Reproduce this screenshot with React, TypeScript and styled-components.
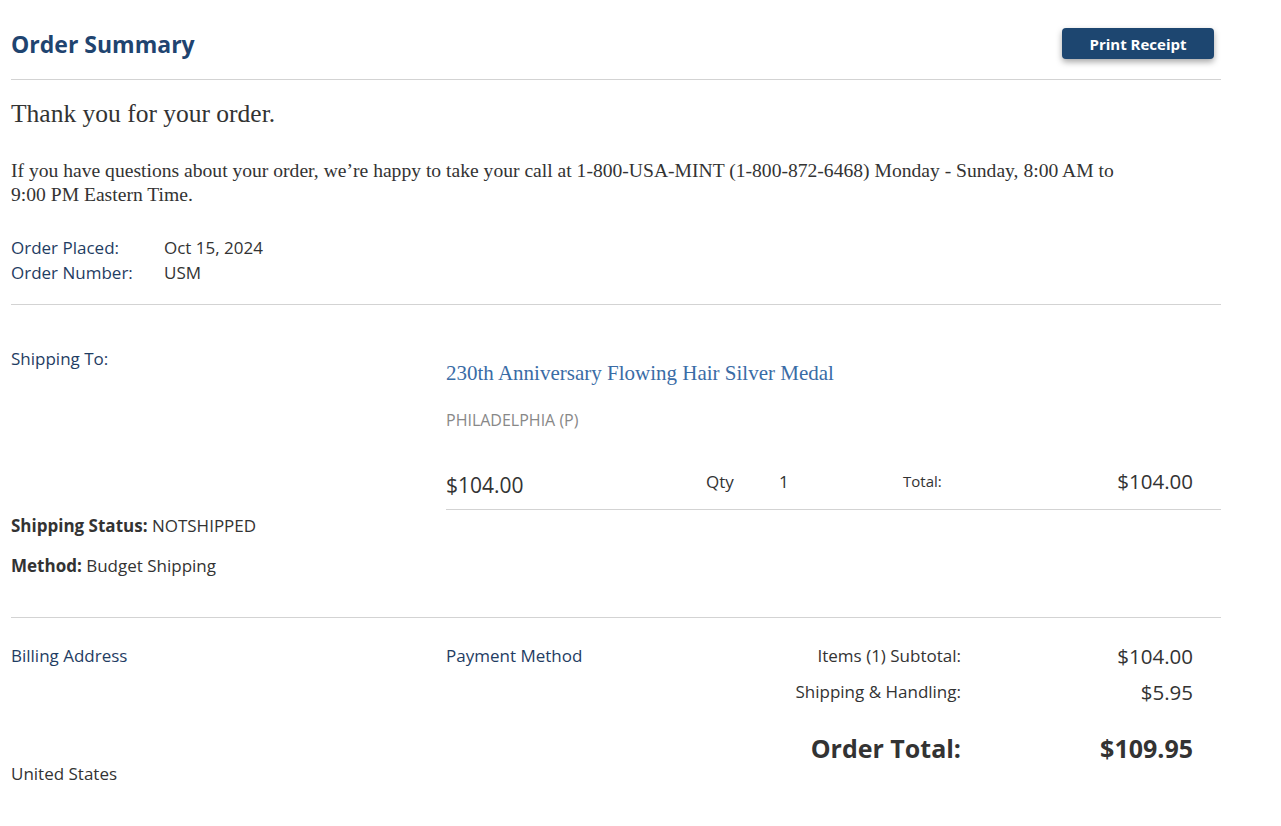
import styled, { createGlobalStyle } from "styled-components";

const GlobalStyle = createGlobalStyle`
  body {
    margin: 0;
    background: #fff;
    font-family: "Open Sans", Lato, Arial, sans-serif;
    color: #333;
  }
`;

interface SummaryLine {
  label: string;
  value: string;
}

const lines: SummaryLine[] = [
  { label: "Items (1) Subtotal:", value: "$104.00" },
  { label: "Shipping & Handling:", value: "$5.95" },
];

export default function App() {
  return (
    <>
      <GlobalStyle />
      <Page>
        <Header>
          <Title>Order Summary</Title>
          <PrintButton>Print Receipt</PrintButton>
        </Header>

        <Intro>
          <Thanks>Thank you for your order.</Thanks>
          <Notice>
            If you have questions about your order, we’re happy to take your call at
            1-800-USA-MINT (1-800-872-6468) Monday - Sunday, 8:00 AM to 9:00 PM Eastern
            Time.
          </Notice>
          <MetaGrid>
            <MetaLabel>Order Placed:</MetaLabel>
            <MetaValue>Oct 15, 2024</MetaValue>
            <MetaLabel>Order Number:</MetaLabel>
            <MetaValue>USM</MetaValue>
          </MetaGrid>
        </Intro>

        <ShippingSection>
          <ShipInfo>
            <Label>Shipping To:</Label>
            <StatusBlock>
              <StatusLine>
                <strong>Shipping Status:</strong> NOTSHIPPED
              </StatusLine>
              <StatusLine>
                <strong>Method:</strong> Budget Shipping
              </StatusLine>
            </StatusBlock>
          </ShipInfo>

          <Item>
            <ItemName>230th Anniversary Flowing Hair Silver Medal</ItemName>
            <ItemMint>PHILADELPHIA (P)</ItemMint>
            <ItemRow>
              <ItemPrice>$104.00</ItemPrice>
              <QtyLabel>Qty</QtyLabel>
              <QtyValue>1</QtyValue>
              <TotalLabel>Total:</TotalLabel>
              <TotalValue>$104.00</TotalValue>
            </ItemRow>
          </Item>
        </ShippingSection>

        <BillingSection>
          <BillingCol>
            <Label>Billing Address</Label>
            <Country>United States</Country>
          </BillingCol>
          <PaymentCol>
            <Label>Payment Method</Label>
          </PaymentCol>
          <Totals>
            {lines.map((l) => (
              <TotalsRow key={l.label}>
                <TotalsLabel>{l.label}</TotalsLabel>
                <TotalsValue>{l.value}</TotalsValue>
              </TotalsRow>
            ))}
            <GrandRow>
              <GrandLabel>Order Total:</GrandLabel>
              <GrandValue>$109.95</GrandValue>
            </GrandRow>
          </Totals>
        </BillingSection>
      </Page>
    </>
  );
}

/* ---------------- Styled Components ---------------- */

const Page = styled.div`
  width: 1210px;
  padding: 0 0 40px 11px;
`;

const Header = styled.div`
  display: flex;
  align-items: center;
  justify-content: space-between;
  height: 80px;
  padding-top: 8px;
  box-sizing: border-box;
  border-bottom: 1px solid #d3d3d3;
`;

const Title = styled.h1`
  margin: 0;
  font-size: 23px;
  font-weight: 700;
  color: #1f4470;
`;

const PrintButton = styled.button`
  width: 152px;
  height: 31px;
  margin-right: 7px;
  border: none;
  border-radius: 4px;
  background: #1d4670;
  color: #fff;
  font-family: "Open Sans", Arial, sans-serif;
  font-size: 15px;
  font-weight: 700;
  box-shadow: 0 3px 6px rgba(0, 0, 0, 0.35);
`;

const Intro = styled.div`
  padding: 18px 0 19px;
  border-bottom: 1px solid #d3d3d3;
`;

const Thanks = styled.p`
  margin: 0;
  font-family: "Liberation Serif", serif;
  font-size: 25.5px;
  line-height: 32px;
  color: #333;
`;

const Notice = styled.p`
  margin: 29px 0 0;
  max-width: 1125px;
  font-family: "Liberation Serif", serif;
  font-size: 19.6px;
  line-height: 24px;
  color: #333;
`;

const MetaGrid = styled.div`
  display: grid;
  grid-template-columns: 153px 1fr;
  margin-top: 28px;
  font-size: 17px;
  line-height: 25px;
`;

const MetaLabel = styled.span`
  color: #1f3d63;
`;

const MetaValue = styled.span`
  color: #333;
`;

const ShippingSection = styled.div`
  display: grid;
  grid-template-columns: 435px 1fr;
  align-items: start;
  padding: 42px 0 39px;
  border-bottom: 1px solid #d3d3d3;
`;

const ShipInfo = styled.div`
  display: flex;
  flex-direction: column;
`;

const Label = styled.div`
  font-size: 17px;
  line-height: 24px;
  color: #1f3d63;
`;

const StatusBlock = styled.div`
  display: flex;
  flex-direction: column;
  gap: 16px;
  margin-top: 143px;
`;

const StatusLine = styled.div`
  font-size: 17px;
  line-height: 24px;
  color: #333;

  strong {
    font-weight: 700;
  }
`;

const Item = styled.div`
  display: flex;
  flex-direction: column;
  padding-top: 12px;
`;

const ItemName = styled.div`
  font-family: "Liberation Serif", serif;
  font-size: 21px;
  line-height: 28px;
  color: #3a6ca6;
`;

const ItemMint = styled.div`
  margin-top: 22px;
  font-size: 16px;
  line-height: 22px;
  color: #888;
`;

const ItemRow = styled.div`
  display: grid;
  grid-template-columns: 260px 73px 124px 100px 1fr;
  align-items: center;
  margin-top: 32px;
  padding: 0 28px 10px 0;
  border-bottom: 1px solid #d3d3d3;
`;

const ItemPrice = styled.span`
  font-size: 21px;
  padding-top: 8px;
  color: #333;
`;

const QtyLabel = styled.span`
  font-size: 17px;
  color: #333;
`;

const QtyValue = styled.span`
  font-size: 17px;
  color: #333;
`;

const TotalLabel = styled.span`
  font-size: 15px;
  color: #333;
`;

const TotalValue = styled.span`
  font-size: 20.5px;
  text-align: right;
  color: #333;
`;

const BillingSection = styled.div`
  display: grid;
  grid-template-columns: 435px 300px 1fr;
  padding: 26px 28px 0 0;
`;

const BillingCol = styled.div`
  display: flex;
  flex-direction: column;
`;

const Country = styled.div`
  margin-top: 94px;
  font-size: 17px;
  line-height: 24px;
  color: #333;
`;

const PaymentCol = styled.div``;

const Totals = styled.div`
  display: flex;
  flex-direction: column;
  gap: 12px;
`;

const TotalsRow = styled.div`
  display: grid;
  grid-template-columns: 1fr 232px;
  align-items: center;
  line-height: 24px;
`;

const TotalsLabel = styled.span`
  font-size: 17px;
  text-align: right;
  color: #333;
`;

const TotalsValue = styled.span`
  font-size: 20.5px;
  text-align: right;
  color: #333;
`;

const GrandRow = styled(TotalsRow)`
  margin-top: 20px;
`;

const GrandLabel = styled(TotalsLabel)`
  font-size: 25px;
  font-weight: 700;
`;

const GrandValue = styled(TotalsValue)`
  font-size: 25px;
  font-weight: 700;
`;
